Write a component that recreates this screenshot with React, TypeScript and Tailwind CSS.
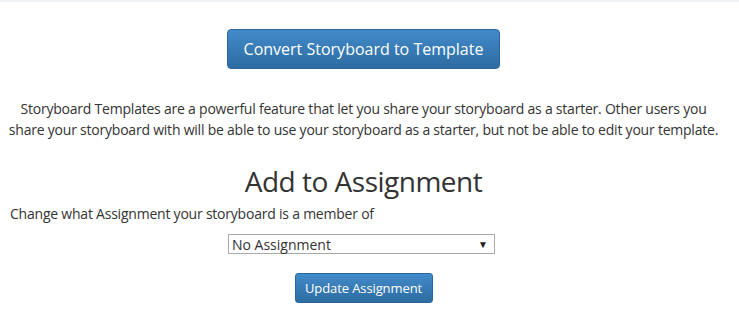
export default function App() {
  return (
    <div
      className="min-h-[315px] w-full bg-white text-[#333]"
      style={{ fontFamily: '"Open Sans", "Liberation Sans", sans-serif' }}
    >
      <div className="h-[2px] bg-[#eef2f5]" />
      <div className="pl-[10px] pr-[22px]">
        <div className="flex justify-center pt-[27px]">
          <button
            type="button"
            className="h-[40px] w-[273px] rounded-[4px] border border-[#2b669a] bg-gradient-to-b from-[#428bca] to-[#2d6ca2] text-[16px] text-white"
          >
            Convert Storyboard to Template
          </button>
        </div>

        <p className="-mx-[10px] mt-[29px] text-center text-[14px] leading-[21px] tracking-[-0.22px]">
          Storyboard Templates are a powerful feature that let you share your storyboard as a starter. Other users you
          <br />
          share your storyboard with will be able to use your storyboard as a starter, but not be able to edit your template.
        </p>

        <h2 className="mt-[25px] text-center text-[28px] leading-[33px] tracking-[-0.5px] text-[#333]">
          Add to Assignment
        </h2>

        <div className="mt-[6px] text-[14px] leading-[20px] tracking-[-0.22px]">
          Change what Assignment your storyboard is a member of
        </div>

        <div className="mt-[10px] flex justify-center">
          <div className="relative mr-[4px] flex h-[20px] w-[267px] items-center border border-[#a9a9a9] bg-white pl-[3px] text-[14px] text-[#333]">
            No Assignment
            <span className="absolute right-[6px] top-[4px] text-[10px] leading-none text-[#222]">▼</span>
          </div>
        </div>

        <div className="mt-[19px] flex justify-center">
          <button
            type="button"
            className="h-[30px] w-[138px] rounded-[3px] border border-[#2b669a] bg-gradient-to-b from-[#428bca] to-[#2d6ca2] text-[13px] leading-none tracking-[-0.1px] text-white"
          >
            Update Assignment
          </button>
        </div>
      </div>
    </div>
  );
}
